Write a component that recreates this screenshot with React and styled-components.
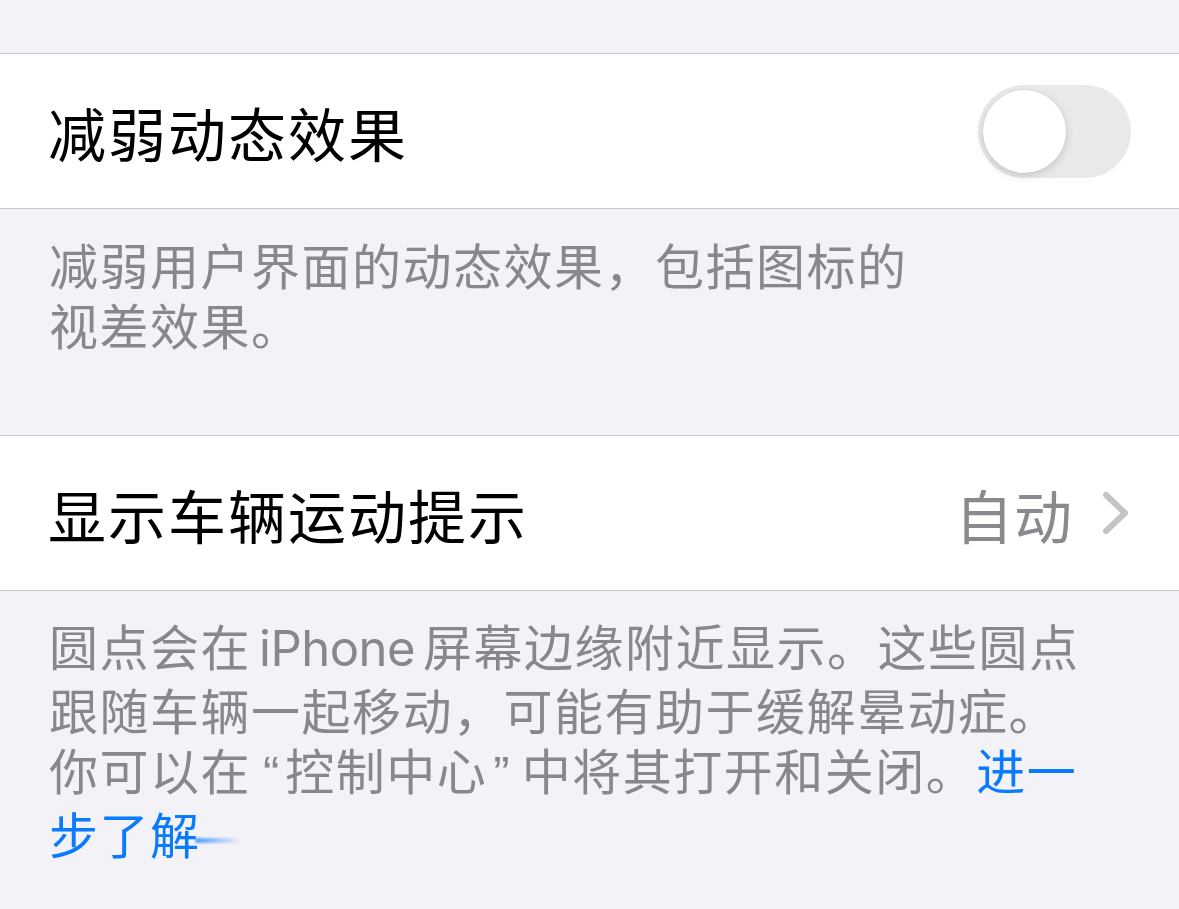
import React from "react";
import styled, { createGlobalStyle } from "styled-components";

const Global = createGlobalStyle`
  html, body { margin: 0; padding: 0; background: #f2f2f7; }
  body { font-family: "Noto Sans CJK SC", "Noto Sans", sans-serif; -webkit-font-smoothing: antialiased; }
`;

const Page = styled.div`
  width: 1179px;
  height: 909px;
  background: #f2f2f7;
  padding-top: 53px;
  box-sizing: border-box;
  overflow: hidden;
`;

const Group = styled.div`
  background: #ffffff;
  border-top: 1px solid #c8c7cc;
  border-bottom: 1px solid #c8c7cc;
`;

const Row = styled.div`
  height: 154px;
  display: flex;
  align-items: center;
  justify-content: space-between;
  padding: 0 48px 0 48px;
`;

const Title = styled.div`
  font-size: 58px;
  letter-spacing: 2px;
  color: #000;
  line-height: 1;
  margin-top: 2px;
`;

const Track = styled.div`
  width: 153px;
  height: 93px;
  border-radius: 47px;
  background: #e9e9eb;
  box-sizing: border-box;
  padding: 5px;
  display: flex;
  align-items: center;
`;

const Knob = styled.div`
  width: 83px;
  height: 83px;
  border-radius: 50%;
  background: #fff;
  box-shadow: 0 3px 8px rgba(0, 0, 0, 0.15), 0 0 1px rgba(0, 0, 0, 0.12);
`;

const Detail = styled.div`
  display: flex;
  align-items: center;
  gap: 28px;
`;

const Value = styled.span`
  font-size: 58px;
  color: #8a8a8e;
  line-height: 1;
  letter-spacing: 1px;
  margin-top: 2px;
`;

const Footer = styled.div`
  padding: ${(p) => p.$top}px 50px ${(p) => p.$bottom}px 49px;
  font-size: 49px;
  line-height: 60px;
  color: #87878c;
  letter-spacing: 1.5px;
`;

const Latin = styled.span`
  font-family: Inter, "Noto Sans", sans-serif;
  letter-spacing: -0.5px;
  margin: 0 ${(p) => p.$m}px;
`;

const Quote = styled.span`
  font-family: "Liberation Sans", sans-serif;
  letter-spacing: 0;
  margin: 0 ${(p) => p.$r}px 0 ${(p) => p.$l}px;
`;

const Link = styled.span`
  color: #0a7aff;
`;

const Trail = styled.span`
  display: inline-block;
  width: 46px;
  height: 5px;
  vertical-align: middle;
  margin-left: -6px;
  background: linear-gradient(90deg, rgba(10, 122, 255, 0.7), rgba(10, 122, 255, 0));
  filter: blur(1px);
  border-radius: 3px;
`;

function Chevron() {
  return (
    <svg width="30" height="44" viewBox="0 0 30 44">
      <path d="M5 4 L24 22 L5 40" fill="none" stroke="#c4c4c7" strokeWidth="6" strokeLinecap="round" strokeLinejoin="round" />
    </svg>
  );
}

export default function App() {
  return (
    <Page>
      <Global />
      <Group>
        <Row>
          <Title>减弱动态效果</Title>
          <Track>
            <Knob />
          </Track>
        </Row>
      </Group>
      <Footer $top={25} $bottom={81}>
        减弱用户界面的动态效果，包括图标的
        <br />
        视差效果。
      </Footer>
      <Group>
        <Row>
          <Title>显示车辆运动提示</Title>
          <Detail>
            <Value>自动</Value>
            <Chevron />
          </Detail>
        </Row>
      </Group>
      <Footer $top={24} $bottom={44}>
        圆点会在<Latin $m={8}>iPhone</Latin>屏幕边缘附近显示。这些圆点
        <br />
        跟随车辆一起移动，可能有助于缓解晕动症。
        <br />
        你可以在<Quote $l={12} $r={6}>“</Quote>控制中心<Quote $l={6} $r={12}>”</Quote>中将其打开和关闭。<Link>进一</Link>
        <br />
        <Link>步了解</Link>
        <Trail />
      </Footer>
    </Page>
  );
}
